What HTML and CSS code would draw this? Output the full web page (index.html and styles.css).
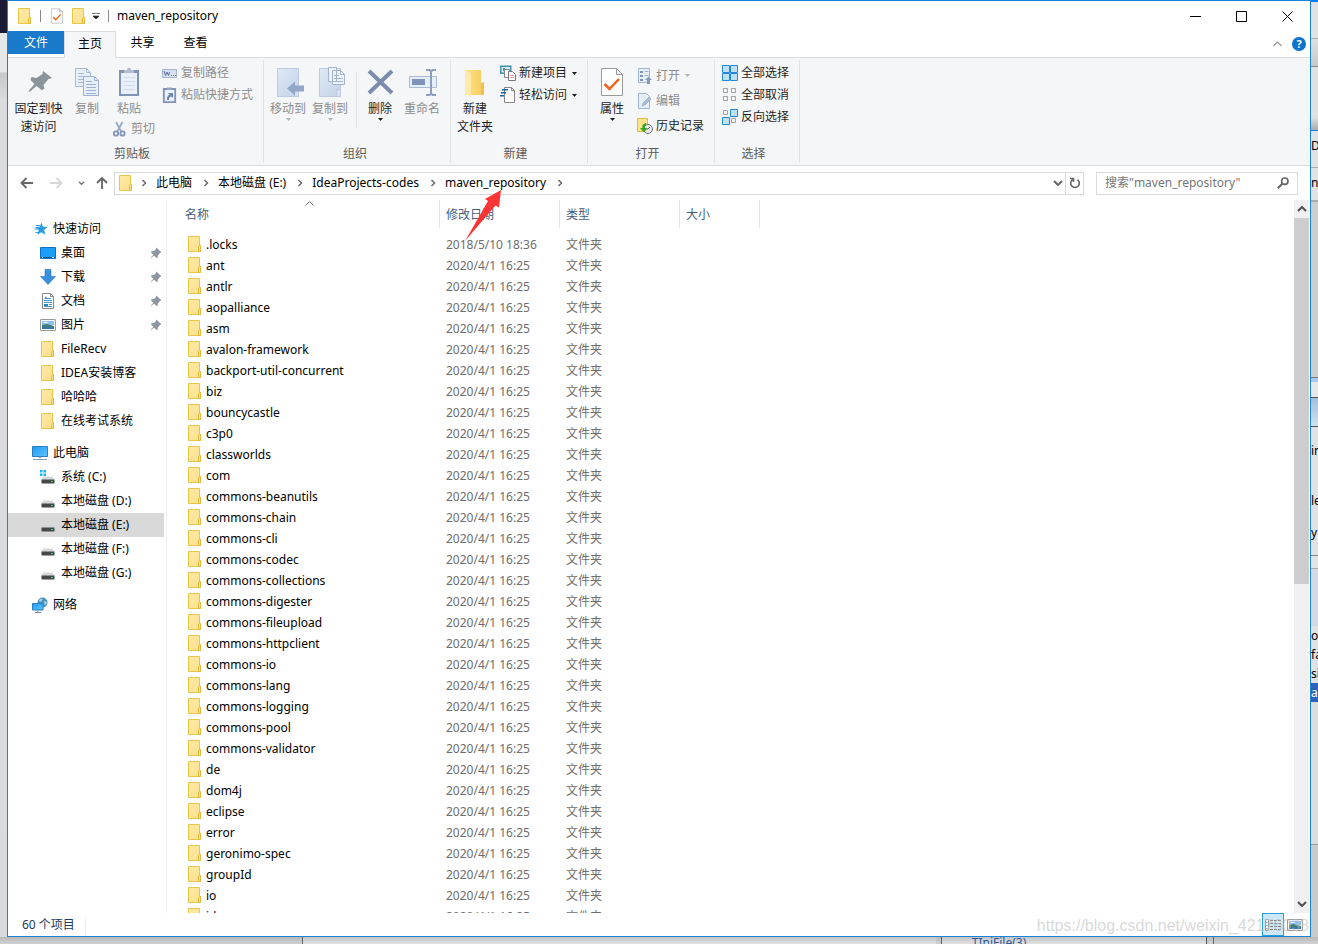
FILE: index.html
```
<!DOCTYPE html>
<html lang="zh-CN">
<head>
    <meta charset="UTF-8">
    <meta name="viewport" content="width=device-width, initial-scale=1.0">
    <title>maven_repository</title>
    <link rel="stylesheet" href="styles.css">
</head>
<body>
    <!-- Icons -->
    <svg class="sprite" aria-hidden="true">
        <defs>
            <linearGradient id="g-folder" x1="0" y1="0" x2="1" y2="1"><stop offset="0" stop-color="#ffeaa6"/><stop offset="1" stop-color="#fce08a"/></linearGradient>
            <linearGradient id="g-open" x1="0" y1="0" x2="1" y2="0"><stop offset="0" stop-color="#ffe08a"/><stop offset="1" stop-color="#f7cc5c"/></linearGradient>
            <linearGradient id="g-screen" x1="0" y1="0" x2="1" y2="1"><stop offset="0" stop-color="#1e9bf5"/><stop offset="1" stop-color="#5cc2ff"/></linearGradient>
            <linearGradient id="g-pale" x1="0" y1="0" x2="1" y2="1"><stop offset="0" stop-color="#dfe9f6"/><stop offset="1" stop-color="#c3d2e8"/></linearGradient>
        </defs>
        <symbol id="folder" viewBox="0 0 16 16">
            <path d="M1.500.5h11v9h1v6h-12z" fill="url(#g-folder)" stroke="#e9c548"/>
            <path d="M11.500 15.500v-5l1-1h1v6z" fill="#ffe38c" stroke="#e0b93c"/>
        </symbol>
        <symbol id="pin" viewBox="0 0 12 12">
            <path d="M6.500.5 11.500 5.500 10 6 8 8l-.3 2.500-1.200.5L4 8.500.8 11.300.5 11l2.800-3.200L1 5.500 1.500 4.200 4 4l2-2z" fill="#8c97a1"/>
        </symbol>
        <symbol id="chevron-right" viewBox="0 0 6 8"><path d="M1.500 1l3 3-3 3" fill="none" stroke="#6b6b6b" stroke-width="1.500"/></symbol>
        <symbol id="chevron-down" viewBox="0 0 10 6"><path d="M1 1l4 4 4-4" fill="none" stroke="currentColor" stroke-width="2"/></symbol>
        <symbol id="caret" viewBox="0 0 5 3"><path d="M0 0h5L2.500 3z" fill="currentColor"/></symbol>
        <symbol id="check-page" viewBox="0 0 24 30">
            <path d="M1.500 1.500h15l6 6v21h-21z" fill="#fff" stroke="#9a9a9a"/>
            <path d="M16.500 1.500v6h6z" fill="#eee" stroke="#9a9a9a"/>
            <path d="M4.500 17l5 5L19 12" fill="none" stroke="#f2601a" stroke-width="2.500"/>
        </symbol>
        <symbol id="drive" viewBox="0 0 16 16">
            <path d="M3 7.500h9.500l2 3.500h-13z" fill="#d5d8da"/>
            <path d="M1.500 10.500h13v4h-13z" fill="#44484b"/>
            <path d="M11 12h2v1h-2z" fill="#3ee04a"/>
        </symbol>
        <symbol id="win-drive" viewBox="0 0 16 16">
            <path d="M0 1h2.500v2.500H0zM3.500 1H6v2.500H3.500zM0 4.500h2.500V7H0zM3.500 4.500H6V7H3.500z" fill="#17b6f0"/>
            <path d="M3 7.500h9.500l2 3.500h-13z" fill="#d5d8da"/>
            <path d="M1.500 10.500h13v4h-13z" fill="#44484b"/>
            <path d="M11 12h2v1h-2z" fill="#3ee04a"/>
        </symbol>
        <symbol id="pages" viewBox="0 0 24 28">
            <path d="M.5.500h11l4 4v14h-15z" fill="#e6eef8" stroke="#a7b9d6"/>
            <path d="M11.500.5v4h4M3 5.500h6M3 8.500h6M3 11.500h6M3 14.500h6" fill="none" stroke="#a7b9d6"/>
            <path d="M8.500 8.500h11l4 4v15h-15z" fill="#e6eef8" stroke="#9db0d0"/>
            <path d="M19.500 8.500v4h4M11 13.500h6M11 16.500h10M11 19.500h10M11 22.500h10M11 25.500h10" fill="none" stroke="#9db0d0"/>
        </symbol>
        <symbol id="picture" viewBox="0 0 16 16">
            <path d="M.5 2.500h15v11H.5z" fill="#fff" stroke="#9a9a9a"/>
            <path d="M2 4h12v4H2z" fill="#8cc0f2"/>
            <path d="M2 8l5-1 7 2v3H2z" fill="#3f7d73"/>
            <path d="M2 10h12v2H2z" fill="#3574ad"/>
            <path d="M3 6c2-2 4-1 5 0z" fill="#fff"/>
        </symbol>
    </svg>

    <div class="desktop">
        <div class="behind-left"></div>

        <main class="window">
            <!-- Title bar -->
            <header class="titlebar">
                <svg class="icon"><use href="#folder"/></svg>
                <span class="divider"></span>
                <button class="quick" aria-label="属性"><svg class="icon-page"><use href="#check-page"/></svg></button>
                <button class="quick" aria-label="新建文件夹"><svg class="icon"><use href="#folder"/></svg></button>
                <button class="quick" aria-label="自定义快速访问工具栏"><svg class="customize" viewBox="0 0 8 7"><path d="M0 .5h8M1 3h6L4 6z" fill="#222" stroke="#222" stroke-width=".6"/></svg></button>
                <span class="divider"></span>
                <h1>maven_repository</h1>
                <div class="window-controls">
                    <button aria-label="最小化"><svg viewBox="0 0 11 11"><path d="M0 5.500h11" stroke="#000"/></svg></button>
                    <button aria-label="最大化"><svg viewBox="0 0 11 11"><path d="M.5.500h10v10H.5z" fill="none" stroke="#000"/></svg></button>
                    <button aria-label="关闭"><svg viewBox="0 0 11 11"><path d="M.5.500l10 10M10.500.5l-10 10" stroke="#000"/></svg></button>
                </div>
            </header>

            <!-- Tabs -->
            <nav class="tabs">
                <button class="tab tab-file">文件</button>
                <button class="tab tab-active">主页</button>
                <button class="tab">共享</button>
                <button class="tab">查看</button>
                <div class="tabs-right">
                    <button aria-label="折叠功能区"><svg class="collapse" viewBox="0 0 9 6"><path d="M.5 5l4-4 4 4" fill="none" stroke="#999" stroke-width="1.200"/></svg></button>
                    <button class="help" aria-label="帮助">?</button>
                </div>
            </nav>

            <!-- Ribbon -->
            <div class="ribbon">
                <section class="group">
                    <div class="group-body">
                        <button class="big big-wide">
                            <svg class="big-icon" viewBox="0 0 32 32"><path d="M20 4l9 7-3.500 1-5 6 1 4-3 1-5-4-7 6-1-1 6-7-4-4 1-3 5 1 6-4z" fill="#8c9499"/></svg>
                            固定到快<br>速访问
                        </button>
                        <button class="big" disabled>
                            <svg class="big-icon" viewBox="-4 -1 32 32"><use href="#pages" width="24" height="28"/></svg>
                            复制
                        </button>
                        <div class="paste">
                            <button class="big" disabled>
                                <svg class="big-icon" viewBox="0 0 32 32">
                                    <path d="M6 3h20v26H6z" fill="#7f94b8"/>
                                    <path d="M8 6h16v21H8z" fill="#e9f0f9"/>
                                    <path d="M10 10.500h12M10 14.500h12M10 18.500h12M10 22.500h12" stroke="#cfdcee"/>
                                    <path d="M11 6V3h3c0-3 4-3 4 0h3v3z" fill="#b2bdcd"/>
                                </svg>
                                粘贴
                            </button>
                            <button class="small" disabled>
                                <svg class="icon" viewBox="0 0 16 16"><path d="M4 1l5.500 10M10.500 1L5 11" stroke="#9aaac6" stroke-width="1.800"/><circle cx="4" cy="12.500" r="2.200" fill="none" stroke="#8194ba" stroke-width="1.800"/><circle cx="10.500" cy="12.500" r="2.200" fill="none" stroke="#8194ba" stroke-width="1.800"/></svg>
                                剪切
                            </button>
                        </div>
                        <div class="small-col">
                            <button class="small" disabled>
                                <svg class="icon" viewBox="0 0 16 16"><path d="M.5 4.500h14v8H.5z" fill="#d4e0f0" stroke="#a5b5d0"/><path d="M2 6l1.500 4.500L5 7l1.500 3.500L7.500 7M9 10.500h1M11 10.500h1M13 10.500h1" fill="none" stroke="#5d74a0"/></svg>
                                复制路径
                            </button>
                            <button class="small" disabled>
                                <svg class="icon" viewBox="0 0 16 16"><path d="M1.800 2h11.400v13.200H1.800z" fill="#e9f0f9" stroke="#8093b7" stroke-width="1.800"/><path d="M5 3V.5h5V3z" fill="#95a6c4"/><path d="M5 13c0-4 1-5 3-5L6 6h5v5L9.500 9.500C7 10 7 11 7 13z" fill="#6c83ae"/></svg>
                                粘贴快捷方式
                            </button>
                        </div>
                    </div>
                    <h2>剪贴板</h2>
                </section>

                <section class="group group-organize">
                    <div class="group-body">
                        <button class="big" disabled>
                            <svg class="big-icon" viewBox="0 0 32 32">
                                <path d="M5.500 1.500h21v28h-21z" fill="url(#g-pale)" stroke="#bccbe2"/>
                                <path d="M22.500 22.500h4v7h-4z" fill="#d5e1f1" stroke="#bccbe2"/>
                                <path d="M15 21.500l8-7v4h9v6h-9v4z" fill="#93a6c8"/>
                            </svg>
                            移动到
                            <svg class="caret"><use href="#caret"/></svg>
                        </button>
                        <button class="big" disabled>
                            <svg class="big-icon" viewBox="0 0 32 32">
                                <path d="M5.500 1.500h21v28h-21z" fill="url(#g-pale)" stroke="#bccbe2"/>
                                <path d="M22.500 22.500h4v7h-4z" fill="#d5e1f1" stroke="#bccbe2"/>
                                <path d="M14.500.5h8v14h-8zM18.500 3.500h8l4 4v10h-12z" fill="#eef3fa" stroke="#a3b4d0"/>
                                <path d="M26.500 3.500v4h4M20 8.500h5M20 11.500h9M20 14.500h9" fill="none" stroke="#a3b4d0"/>
                            </svg>
                            复制到
                            <svg class="caret"><use href="#caret"/></svg>
                        </button>
                        <span class="group-divider"></span>
                        <button class="big">
                            <svg class="big-icon" viewBox="0 0 32 32"><path d="M5 4l23 22M28 4L5 26" stroke="#7b8cae" stroke-width="4"/></svg>
                            删除
                            <svg class="caret"><use href="#caret"/></svg>
                        </button>
                        <button class="big" disabled>
                            <svg class="big-icon" viewBox="0 0 32 32">
                                <path d="M3.500 9.500h27v11h-27z" fill="#e6eef8" stroke="#a9bad6"/>
                                <path d="M6 12h13v6H6z" fill="#8093b8"/>
                                <path d="M20 3h3.500l1.500 1.500L26.500 3H30M25 4v23M20 28h3.500l1.500-1.500 1.500 1.500H30" fill="none" stroke="#8c9fc2" stroke-width="2"/>
                            </svg>
                            重命名
                        </button>
                    </div>
                    <h2>组织</h2>
                </section>

                <section class="group">
                    <div class="group-body">
                        <button class="big">
                            <svg class="big-icon" viewBox="0 0 32 32">
                                <path d="M6 3h16v13h3v12H6z" fill="url(#g-open)"/>
                                <path d="M6 3l6 3v24l-6-4z" fill="#ffe9ab"/>
                                <path d="M22 16l3-1v12l-3 1z" fill="#eec051"/>
                            </svg>
                            新建<br>文件夹
                        </button>
                        <div class="small-col">
                            <button class="small">
                                <svg class="icon" viewBox="0 0 16 16"><path d="M.8 1.200h10v7h-10z" fill="#d8eef8" stroke="#3d8fa8" stroke-width="1.400"/><path d="M3 3h2v3H3z" fill="#3d8fa8"/><path d="M4.500 4.500h5v8h-5z" fill="#fff" stroke="#888"/><path d="M8.500 6.500h4l3 3v6h-7z" fill="#fff" stroke="#777"/><path d="M10 10.500h4M10 12.500h4" stroke="#e99"/></svg>
                                新建项目
                                <svg class="caret"><use href="#caret"/></svg>
                            </button>
                            <button class="small">
                                <svg class="icon" viewBox="0 0 16 16"><path d="M4.500.5h7l3 3v12h-10z" fill="#fff" stroke="#888"/><path d="M11.500.5v3h3" fill="none" stroke="#888"/><path d="M2 2.700h6M1 5.700h5M0 8.700h4" stroke="#1665ad" stroke-width="1.400"/></svg>
                                轻松访问
                                <svg class="caret"><use href="#caret"/></svg>
                            </button>
                        </div>
                    </div>
                    <h2>新建</h2>
                </section>

                <section class="group">
                    <div class="group-body">
                        <button class="big">
                            <svg class="big-icon" viewBox="-4 0 32 32"><use href="#check-page" width="24" height="30"/></svg>
                            属性
                            <svg class="caret"><use href="#caret"/></svg>
                        </button>
                        <div class="small-col small-col-tall">
                            <button class="small" disabled>
                                <svg class="icon" viewBox="0 0 16 16"><path d="M1.500.500h11v14h-11z" fill="#e6eef8" stroke="#a3b4d0"/><path d="M3 3h3v2H3zM3 7h3v2H3zM3 11h3v2H3z" fill="#7f94b8"/><path d="M7.500 3.500h4M7.500 7.500h4" stroke="#a3b4d0"/><path d="M8 12l3.500-3.500L15 12h-2v4h-3v-4z" fill="#8599be"/></svg>
                                打开
                                <svg class="caret"><use href="#caret"/></svg>
                            </button>
                            <button class="small" disabled>
                                <svg class="icon" viewBox="0 0 16 16"><path d="M1.500.500h8l3 3v12h-11z" fill="#e6eef8" stroke="#a3b4d0"/><path d="M5 13l1-3 6-6 2 2-6 6z" fill="#a9bcdb" stroke="#8ea2c6" stroke-width=".6"/></svg>
                                编辑
                            </button>
                            <button class="small">
                                <svg class="icon" viewBox="0 0 16 16"><path d="M.5.500h10v13H.5z" fill="#fbe28b" stroke="#dfba45"/><circle cx="11" cy="11" r="4.500" fill="#e9e9e9" stroke="#777"/><path d="M11 11l2-2M11 11H9" stroke="#555"/><path d="M9 5c-4 1-4 4-3.500 5L3 10l4 4.500L10 10H8c-.5-1.500 0-2.500 1.500-3z" fill="#35a81f"/></svg>
                                历史记录
                            </button>
                        </div>
                    </div>
                    <h2>打开</h2>
                </section>

                <section class="group">
                    <div class="group-body">
                        <div class="small-col">
                            <button class="small">
                                <svg class="icon" viewBox="0 0 16 16"><path d="M.5.500h7v7h-7zM8.500.500h7v7h-7zM.5 8.500h7v7h-7zM8.500 8.500h7v7h-7z" fill="#bfe1f8" stroke="#2688d8"/></svg>
                                全部选择
                            </button>
                            <button class="small">
                                <svg class="icon" viewBox="0 0 16 16"><path d="M1.500 1.500h4v4h-4zM9.500 1.500h4v4h-4zM1.500 9.500h4v4h-4zM9.500 9.500h4v4h-4z" fill="#fafafa" stroke="#a0a0a0"/></svg>
                                全部取消
                            </button>
                            <button class="small">
                                <svg class="icon" viewBox="0 0 16 16"><path d="M1.500 1.500h4v4h-4zM9.500 9.500h4v4h-4z" fill="#fafafa" stroke="#a0a0a0"/><path d="M8.500.500h7v7h-7zM.5 8.500h7v7h-7z" fill="#bfe1f8" stroke="#2688d8"/></svg>
                                反向选择
                            </button>
                        </div>
                    </div>
                    <h2>选择</h2>
                </section>
            </div>

            <!-- Address bar -->
            <div class="navbar">
                <button class="nav-btn" aria-label="后退"><svg viewBox="0 0 14 12"><path d="M1.500 6H13M6.500 1l-5 5 5 5" fill="none" stroke="#666" stroke-width="1.800"/></svg></button>
                <button class="nav-btn" aria-label="前进" disabled><svg viewBox="0 0 14 12"><path d="M12.500 6H1M7.500 1l5 5-5 5" fill="none" stroke="#d6d6d6" stroke-width="1.800"/></svg></button>
                <button class="nav-btn nav-recent" aria-label="最近浏览的位置"><svg><use href="#chevron-down"/></svg></button>
                <button class="nav-btn nav-up" aria-label="上移"><svg viewBox="0 0 14 12"><path d="M7 1v11M2 6l5-5 5 5" fill="none" stroke="#666" stroke-width="1.800"/></svg></button>
                <div class="address">
                    <svg class="icon"><use href="#folder"/></svg>
                    <svg class="crumb-sep"><use href="#chevron-right"/></svg>
                    <a href="#">此电脑</a>
                    <svg class="crumb-sep"><use href="#chevron-right"/></svg>
                    <a href="#">本地磁盘 (E:)</a>
                    <svg class="crumb-sep"><use href="#chevron-right"/></svg>
                    <a href="#">IdeaProjects-codes</a>
                    <svg class="crumb-sep"><use href="#chevron-right"/></svg>
                    <a href="#">maven_repository</a>
                    <svg class="crumb-sep"><use href="#chevron-right"/></svg>
                    <button class="history" aria-label="以前的位置"><svg><use href="#chevron-down"/></svg></button>
                    <button class="refresh" aria-label="刷新"><svg viewBox="0 0 12 12"><path d="M8.500 2.700A4.300 4.300 0 1 1 3.500 2.700M1 1.500h3.500V5" fill="none" stroke="#666" stroke-width="1.600"/></svg></button>
                </div>
                <div class="search">
                    <input type="text" aria-label="搜索" placeholder='搜索"maven_repository"'>
                    <svg viewBox="0 0 12 12"><circle cx="7.800" cy="4.200" r="3.200" fill="none" stroke="#666" stroke-width="1.600"/><path d="M5.500 6.500L.8 11.200" stroke="#666" stroke-width="2"/></svg>
                </div>
            </div>

            <div class="content">
                <!-- Navigation pane -->
                <nav class="sidebar">
                    <a href="#" class="root"><svg class="icon" viewBox="0 0 16 16"><path d="M9.500 1.500l1.500 4.300 4.500.2-3.500 3 1.300 4.700-4-2.500-3.800 2.500 1.200-4.700-3.700-3 4.700-.2z" fill="#2a9be8"/><path d="M4 4.500h4M2.500 8h4M3.500 11.500h4" stroke="#2a9be8"/></svg>快速访问</a>
                    <a href="#"><svg class="icon" viewBox="0 0 16 16"><path d="M.5 2.500h15v11H.5z" fill="#1c9dfa" stroke="#0b6fc4"/><path d="M1 12.500h14" stroke="#0b5ea8"/><path d="M2 12.500h1M12 12.500h2" stroke="#fff"/></svg>桌面<svg class="pin"><use href="#pin"/></svg></a>
                    <a href="#"><svg class="icon" viewBox="0 0 16 16"><path d="M5 .5h6v7h4.500L8 15.500.5 7.500H5z" fill="#3a8fdf" stroke="#2779c6" stroke-width=".6"/></svg>下载<svg class="pin"><use href="#pin"/></svg></a>
                    <a href="#"><svg class="icon" viewBox="0 0 16 16"><path d="M2.500.500h8l3 3v12h-11z" fill="#fff" stroke="#888"/><path d="M10.500.5v3h3" fill="none" stroke="#888"/><path d="M4 7.500h8M4 9.500h8M9 11.500h3M4 13.500h8M7 5.500h4" stroke="#3e97cc"/><path d="M4.500 6L6 3l1 3M4 11h4v2H4z" fill="#2c86be"/></svg>文档<svg class="pin"><use href="#pin"/></svg></a>
                    <a href="#"><svg class="icon"><use href="#picture"/></svg>图片<svg class="pin"><use href="#pin"/></svg></a>
                    <a href="#"><svg class="icon"><use href="#folder"/></svg>FileRecv</a>
                    <a href="#"><svg class="icon"><use href="#folder"/></svg>IDEA安装博客</a>
                    <a href="#"><svg class="icon"><use href="#folder"/></svg>哈哈哈</a>
                    <a href="#"><svg class="icon"><use href="#folder"/></svg>在线考试系统</a>
                    <a href="#" class="root root-gap"><svg class="icon" viewBox="0 0 16 16"><path d="M.5 1.500h15v10H.5z" fill="url(#g-screen)" stroke="#2a7fc0"/><path d="M6.500 12h3v1.500h-3z" fill="#b9c4cc"/><path d="M1 14.500h14" stroke="#8fa0ad"/></svg>此电脑</a>
                    <a href="#"><svg class="icon"><use href="#win-drive"/></svg>系统 (C:)</a>
                    <a href="#"><svg class="icon"><use href="#drive"/></svg>本地磁盘 (D:)</a>
                    <a href="#" class="selected"><svg class="icon"><use href="#drive"/></svg>本地磁盘 (E:)</a>
                    <a href="#"><svg class="icon"><use href="#drive"/></svg>本地磁盘 (F:)</a>
                    <a href="#"><svg class="icon"><use href="#drive"/></svg>本地磁盘 (G:)</a>
                    <a href="#" class="root root-gap"><svg class="icon" viewBox="0 0 16 16"><circle cx="10.500" cy="5.500" r="5" fill="#4b93bd"/><path d="M8 2c2-1.500 3 0 2 1.500S8 5 7 4zM12 4c2 0 3 1 2.500 3l-2 1z" fill="#a9d5ea"/><path d="M.5 6.500h10.500v6.500H.5z" fill="url(#g-screen)" stroke="#2a7fc0"/><path d="M3 15.500h6M5.800 13v2" stroke="#7d909e"/></svg>网络</a>
                </nav>

                <!-- File list -->
                <div class="files">
                    <table>
                        <colgroup><col class="col-name"><col class="col-date"><col class="col-type"><col class="col-size"><col></colgroup>
                        <thead>
                            <tr>
                                <th><span>名称</span><svg class="sort" viewBox="0 0 9 5"><path d="M.5 4.500l4-4 4 4" fill="none" stroke="#777"/></svg></th>
                                <th><span>修改日期</span></th>
                                <th><span>类型</span></th>
                                <th><span>大小</span></th>
                                <th></th>
                            </tr>
                        </thead>
                        <tbody>
                            <tr><td><svg class="icon"><use href="#folder"/></svg>.locks</td><td>2018/5/10 18:36</td><td>文件夹</td><td></td><td></td></tr>
                            <tr><td><svg class="icon"><use href="#folder"/></svg>ant</td><td>2020/4/1 16:25</td><td>文件夹</td><td></td><td></td></tr>
                            <tr><td><svg class="icon"><use href="#folder"/></svg>antlr</td><td>2020/4/1 16:25</td><td>文件夹</td><td></td><td></td></tr>
                            <tr><td><svg class="icon"><use href="#folder"/></svg>aopalliance</td><td>2020/4/1 16:25</td><td>文件夹</td><td></td><td></td></tr>
                            <tr><td><svg class="icon"><use href="#folder"/></svg>asm</td><td>2020/4/1 16:25</td><td>文件夹</td><td></td><td></td></tr>
                            <tr><td><svg class="icon"><use href="#folder"/></svg>avalon-framework</td><td>2020/4/1 16:25</td><td>文件夹</td><td></td><td></td></tr>
                            <tr><td><svg class="icon"><use href="#folder"/></svg>backport-util-concurrent</td><td>2020/4/1 16:25</td><td>文件夹</td><td></td><td></td></tr>
                            <tr><td><svg class="icon"><use href="#folder"/></svg>biz</td><td>2020/4/1 16:25</td><td>文件夹</td><td></td><td></td></tr>
                            <tr><td><svg class="icon"><use href="#folder"/></svg>bouncycastle</td><td>2020/4/1 16:25</td><td>文件夹</td><td></td><td></td></tr>
                            <tr><td><svg class="icon"><use href="#folder"/></svg>c3p0</td><td>2020/4/1 16:25</td><td>文件夹</td><td></td><td></td></tr>
                            <tr><td><svg class="icon"><use href="#folder"/></svg>classworlds</td><td>2020/4/1 16:25</td><td>文件夹</td><td></td><td></td></tr>
                            <tr><td><svg class="icon"><use href="#folder"/></svg>com</td><td>2020/4/1 16:25</td><td>文件夹</td><td></td><td></td></tr>
                            <tr><td><svg class="icon"><use href="#folder"/></svg>commons-beanutils</td><td>2020/4/1 16:25</td><td>文件夹</td><td></td><td></td></tr>
                            <tr><td><svg class="icon"><use href="#folder"/></svg>commons-chain</td><td>2020/4/1 16:25</td><td>文件夹</td><td></td><td></td></tr>
                            <tr><td><svg class="icon"><use href="#folder"/></svg>commons-cli</td><td>2020/4/1 16:25</td><td>文件夹</td><td></td><td></td></tr>
                            <tr><td><svg class="icon"><use href="#folder"/></svg>commons-codec</td><td>2020/4/1 16:25</td><td>文件夹</td><td></td><td></td></tr>
                            <tr><td><svg class="icon"><use href="#folder"/></svg>commons-collections</td><td>2020/4/1 16:25</td><td>文件夹</td><td></td><td></td></tr>
                            <tr><td><svg class="icon"><use href="#folder"/></svg>commons-digester</td><td>2020/4/1 16:25</td><td>文件夹</td><td></td><td></td></tr>
                            <tr><td><svg class="icon"><use href="#folder"/></svg>commons-fileupload</td><td>2020/4/1 16:25</td><td>文件夹</td><td></td><td></td></tr>
                            <tr><td><svg class="icon"><use href="#folder"/></svg>commons-httpclient</td><td>2020/4/1 16:25</td><td>文件夹</td><td></td><td></td></tr>
                            <tr><td><svg class="icon"><use href="#folder"/></svg>commons-io</td><td>2020/4/1 16:25</td><td>文件夹</td><td></td><td></td></tr>
                            <tr><td><svg class="icon"><use href="#folder"/></svg>commons-lang</td><td>2020/4/1 16:25</td><td>文件夹</td><td></td><td></td></tr>
                            <tr><td><svg class="icon"><use href="#folder"/></svg>commons-logging</td><td>2020/4/1 16:25</td><td>文件夹</td><td></td><td></td></tr>
                            <tr><td><svg class="icon"><use href="#folder"/></svg>commons-pool</td><td>2020/4/1 16:25</td><td>文件夹</td><td></td><td></td></tr>
                            <tr><td><svg class="icon"><use href="#folder"/></svg>commons-validator</td><td>2020/4/1 16:25</td><td>文件夹</td><td></td><td></td></tr>
                            <tr><td><svg class="icon"><use href="#folder"/></svg>de</td><td>2020/4/1 16:25</td><td>文件夹</td><td></td><td></td></tr>
                            <tr><td><svg class="icon"><use href="#folder"/></svg>dom4j</td><td>2020/4/1 16:25</td><td>文件夹</td><td></td><td></td></tr>
                            <tr><td><svg class="icon"><use href="#folder"/></svg>eclipse</td><td>2020/4/1 16:25</td><td>文件夹</td><td></td><td></td></tr>
                            <tr><td><svg class="icon"><use href="#folder"/></svg>error</td><td>2020/4/1 16:25</td><td>文件夹</td><td></td><td></td></tr>
                            <tr><td><svg class="icon"><use href="#folder"/></svg>geronimo-spec</td><td>2020/4/1 16:25</td><td>文件夹</td><td></td><td></td></tr>
                            <tr><td><svg class="icon"><use href="#folder"/></svg>groupId</td><td>2020/4/1 16:25</td><td>文件夹</td><td></td><td></td></tr>
                            <tr><td><svg class="icon"><use href="#folder"/></svg>io</td><td>2020/4/1 16:25</td><td>文件夹</td><td></td><td></td></tr>
                            <tr><td><svg class="icon"><use href="#folder"/></svg>jdom</td><td>2020/4/1 16:25</td><td>文件夹</td><td></td><td></td></tr>
                        </tbody>
                    </table>
                </div>

                <div class="scrollbar">
                    <svg viewBox="0 0 10 6"><path d="M1 5l4-4 4 4" fill="none" stroke="#505050" stroke-width="2"/></svg>
                    <div class="track"><div class="thumb"></div></div>
                    <svg viewBox="0 0 10 6"><path d="M1 1l4 4 4-4" fill="none" stroke="#505050" stroke-width="2"/></svg>
                </div>
            </div>

            <!-- Status bar -->
            <footer class="statusbar">
                <span class="count">60 个项目</span>
                <div class="views">
                    <button class="view view-active" aria-label="详细信息"><svg class="icon" viewBox="0 0 16 16"><path d="M.5 2.500h3v11h-3z" fill="#fff" stroke="#999"/><path d="M1.500 5.500h1M1.500 8.500h1" stroke="#3b78b8"/><path d="M1.500 11.500h1" stroke="#d33"/><path d="M5 3.500h11M5 6.500h11M5 9.500h11M5 12.500h11" stroke="#777" stroke-dasharray="3 1"/></svg></button>
                    <button class="view" aria-label="大图标"><svg class="icon"><use href="#picture"/></svg></button>
                </div>
            </footer>

            <svg class="arrow" viewBox="0 0 36 52"><path d="M36 0L20 9l3 2L0 51l30.500-35.500 3.500 2z" fill="#fb3535"/></svg>
            <div class="watermark">https://blog.csdn.net/weixin_42176038</div>
        </main>

        <!-- Edges of the windows behind -->
        <div class="behind-right">
            <div class="slice slice-blue"></div>
            <div class="slice slice-top"></div>
            <div class="slice slice-tools"></div>
            <div class="slice slice-shade"></div>
            <div class="slice slice-d">D</div>
            <div class="slice slice-n">n,</div>
            <div class="slice slice-gray"></div>
            <div class="slice slice-aero"></div>
            <div class="slice slice-text">in</div>
            <div class="slice slice-text">le</div>
            <div class="slice slice-y">y</div>
            <div class="slice slice-head"></div>
            <div class="slice slice-row">ou</div>
            <div class="slice slice-row">fa</div>
            <div class="slice slice-row">si</div>
            <div class="slice slice-row slice-on">a</div>
            <div class="slice slice-low"></div>
            <div class="slice slice-end"></div>
        </div>

        <div class="behind-bottom">
            <div class="bottom-a"></div>
            <div class="bottom-b"></div>
            <div class="bottom-c">TIniFile(3)</div>
            <div class="bottom-d"></div>
        </div>
    </div>
</body>
</html>
```
FILE: styles.css
```
* {
    box-sizing: border-box;
}
body {
    margin: 0;
    font-family: "Noto Sans", "Noto Sans CJK SC", sans-serif;
    font-size: 12px;
    line-height: 18px;
    color: #000;
    background-color: #d6d6d6;
}
button {
    margin: 0;
    padding: 0;
    border: none;
    background: none;
    font: inherit;
    color: inherit;
    cursor: default;
}
a {
    color: inherit;
    text-decoration: none;
}
svg {
    display: block;
    flex: none;
}
.sprite {
    position: absolute;
    width: 0;
    height: 0;
}
.icon {
    width: 16px;
    height: 16px;
}
.caret {
    width: 5px;
    height: 3px;
}

/* Desktop */
.desktop {
    display: grid;
    grid-template-columns: 7px minmax(0, 1fr) 7px;
    grid-template-rows: minmax(0, 1fr) 7px;
    height: 100vh;
    overflow: hidden;
}
.behind-left {
    background: linear-gradient(#1b1b38 33px, #e6e7e9 33px, #e6e7e9 72px, #c8c8c8 73px, #dcdcde 100px, #d8dadd);
}
.behind-right {
    display: flex;
    flex-direction: column;
    overflow: hidden;
    background: #e2e2e2;
}
.behind-bottom {
    grid-column: 1 / -1;
    display: flex;
    overflow: hidden;
    background: linear-gradient(#b8b8b8, #d2d2d2);
}
.bottom-a {
    width: 23%;
    border-right: 1px solid #666;
}
.bottom-b {
    width: 48%;
    background: linear-gradient(#c4c4c4, #e2e2e2);
}
.bottom-c {
    flex: 1;
    margin-left: 5px;
    padding-left: 30px;
    border-left: 1px solid #1e6fb8;
    border-right: 1px solid #555;
    line-height: 12px;
    color: #2a5a9a;
    background: linear-gradient(#c4c4c4, #e2e2e2);
}
.bottom-d {
    width: 8%;
    margin-left: 6px;
    border-left: 1px solid #666;
}
.slice {
    flex: none;
    overflow: hidden;
    white-space: nowrap;
}
.slice-blue {
    height: 2px;
    background: #0a7bf0;
}
.slice-top {
    height: 37px;
    border-bottom: 1px solid #aaa;
}
.slice-tools {
    height: 28px;
    background: linear-gradient(#e0e0e0, #c8c8c8);
    border-bottom: 1px solid #888;
}
.slice-shade {
    height: 64px;
    background: linear-gradient(#e0e0e0 80%, #aaa);
    border-bottom: 1px solid #1883d7;
}
.slice-d {
    height: 37px;
    line-height: 30px;
    border-bottom: 1px solid #aaa;
}
.slice-n {
    height: 33px;
    line-height: 30px;
    border-bottom: 1px solid #aaa;
}
.slice-gray {
    height: 177px;
    background: #cdcdcd;
    border-top: 1px solid #aaa;
    border-bottom: 1px solid #777;
}
.slice-aero {
    height: 49px;
    background: linear-gradient(#a9c8ec 4px, #e8e8e8 4px, #e8e8e8 19px, #555 19px, #555 20px, #a5bedb 20px, #cfe3ea);
    border-bottom: 1px solid #555;
}
.slice-text {
    height: 50px;
    line-height: 48px;
}
.slice-y {
    height: 29px;
    line-height: 12px;
    border-bottom: 1px solid #888;
}
.slice-head {
    height: 70px;
    background: linear-gradient(#e4e4e4 12px, #aaa 12px, #aaa 13px, #d5d9e2 13px);
}
.slice-row {
    height: 19px;
    line-height: 19px;
}
.slice-on {
    color: #fff;
    background: #2f62b8;
}
.slice-low {
    height: 143px;
    background: #dcdcdc;
    border-bottom: 1px solid #999;
}
.slice-end {
    flex: 1;
    background: #cacaca;
}

/* Window */
.window {
    position: relative;
    display: flex;
    flex-direction: column;
    min-width: 0;
    background: #fff;
    border: 1px solid #1883d7;
}
.titlebar {
    display: flex;
    align-items: center;
    height: 30px;
    padding-left: 9px;
}
.titlebar h1 {
    flex: none;
    margin: 0 0 0 8px;
    font-size: 12px;
    font-weight: normal;
}
.divider {
    width: 1px;
    height: 12px;
    margin: 0 7px;
    background: #888;
}
.quick {
    flex: none;
    margin-right: 5px;
}
.quick + .divider {
    margin: 0 0 0 3px;
}
.icon-page {
    width: 18px;
    height: 16px;
}
.customize {
    width: 8px;
    height: 7px;
}
.window-controls {
    display: flex;
    margin-left: auto;
}
.window-controls button {
    display: flex;
    align-items: center;
    justify-content: center;
    width: 46px;
    height: 29px;
}
.window-controls svg {
    width: 11px;
    height: 11px;
}

/* Tabs */
.tabs {
    display: flex;
    height: 27px;
    border-bottom: 1px solid #dadbdc;
}
.tab {
    width: 53px;
    height: 24px;
}
.tab-file {
    width: 56px;
    height: 23px;
    color: #fff;
    background: #1979ca;
}
.tab-active {
    width: 52px;
    height: 27px;
    padding-bottom: 2px;
    background: #f5f6f7;
    border: 1px solid #dadbdc;
    border-bottom: none;
}
.tabs-right {
    display: flex;
    align-items: center;
    gap: 10px;
    margin-left: auto;
    padding-right: 4px;
}
.collapse {
    width: 9px;
    height: 6px;
}
.help {
    width: 14px;
    height: 14px;
    border-radius: 50%;
    line-height: 14px;
    font-size: 11px;
    font-weight: bold;
    color: #fff;
    background: #0b72cf;
}

/* Ribbon */
.ribbon {
    display: flex;
    height: 108px;
    padding: 2px 0;
    background: #f5f6f7;
    border-bottom: 1px solid #dadbdc;
}
.group {
    display: flex;
    flex-direction: column;
    justify-content: space-between;
    padding: 0 10px 0 3px;
    border-right: 1px solid #e1e2e4;
}
.group-organize {
    padding-right: 7px;
}
.group h2 {
    margin: 0;
    font-size: 12px;
    font-weight: normal;
    text-align: center;
    color: #5a5a5a;
}
.group-body {
    display: flex;
    align-items: flex-start;
}
.big {
    display: flex;
    flex-direction: column;
    align-items: center;
    width: 42px;
    padding-top: 7px;
    white-space: nowrap;
    color: #1e1e1e;
}
.big-wide {
    width: 55px;
}
.big-icon {
    width: 32px;
    height: 32px;
    margin-bottom: 1px;
}
.small {
    display: flex;
    align-items: center;
    gap: 3px;
    height: 22px;
    white-space: nowrap;
    color: #1e1e1e;
}
.small .caret {
    margin-left: 2px;
}
.big:disabled,
.small:disabled {
    color: #8d8d8d;
}
.small:disabled .caret,
.big:disabled .caret {
    color: #b0b0b0;
}
.small-col {
    padding-top: 2px;
    margin-left: 4px;
}
.small-col-tall {
    padding-top: 3px;
}
.small-col-tall .small {
    height: 25px;
}
.paste .small {
    margin: 0 3px 0 4px;
}
.group-divider {
    width: 1px;
    height: 56px;
    margin: 12px 2px 0 5px;
    background: #e1e2e4;
}

/* Address bar */
.navbar {
    display: flex;
    align-items: center;
    height: 34px;
    padding: 0 12px;
}
.nav-btn svg {
    width: 14px;
    height: 12px;
}
.nav-btn {
    margin-right: 15px;
}
.nav-recent {
    margin-right: 10px;
    color: #777;
}
.nav-recent svg {
    width: 7px;
    height: 4px;
}
.nav-up {
    margin-right: 5px;
}
.address {
    display: flex;
    flex: 1;
    align-items: center;
    height: 23px;
    padding-left: 3px;
    border: 1px solid #d9d9d9;
    white-space: nowrap;
}
.crumb-sep {
    width: 6px;
    height: 8px;
    margin: 0 9px 0 11px;
}
.address .icon + .crumb-sep {
    margin-left: 7px;
}
.history {
    margin-left: auto;
    padding: 0 2px;
    color: #666;
}
.history svg {
    width: 10px;
    height: 6px;
}
.refresh {
    display: flex;
    align-items: center;
    height: 21px;
    padding: 0 2px 0 3px;
    border-left: 1px solid #d9d9d9;
}
.refresh svg {
    width: 12px;
    height: 12px;
}
.search {
    display: flex;
    align-items: center;
    width: 202px;
    height: 23px;
    margin-left: 12px;
    padding: 0 8px;
    border: 1px solid #d9d9d9;
}
.search input {
    flex: 1;
    min-width: 0;
    padding: 0;
    border: none;
    outline: none;
    font: inherit;
}
.search input::placeholder {
    color: #767676;
}
.search svg {
    width: 12px;
    height: 12px;
}

/* Content */
.content {
    display: flex;
    flex: 1;
    min-height: 0;
}
.sidebar {
    width: 159px;
    padding: 17px 2px 0 0;
    border-right: 1px solid #f0f0f0;
}
.sidebar a {
    display: flex;
    align-items: center;
    gap: 5px;
    height: 24px;
    padding: 0 2px 0 32px;
}
.sidebar .root {
    padding-left: 24px;
}
.sidebar .root-gap {
    margin-top: 8px;
}
.sidebar .selected {
    background: #d9d9d9;
}
.pin {
    width: 12px;
    height: 12px;
    margin-left: auto;
}
.files {
    flex: 1;
    min-width: 0;
    overflow: hidden;
}
.files table {
    width: 100%;
    table-layout: fixed;
    border-collapse: collapse;
}
.col-name {
    width: 273px;
}
.col-date,
.col-type {
    width: 120px;
}
.col-size {
    width: 80px;
}
.files th {
    position: relative;
    height: 34px;
    padding: 0 0 6px;
    font-weight: normal;
    text-align: left;
    color: #44607f;
}
.files th span {
    display: block;
    height: 28px;
    padding-left: 6px;
    line-height: 30px;
    border-right: 1px solid #e5e5e5;
}
.files th:first-child span {
    padding-left: 18px;
}
.sort {
    position: absolute;
    top: 1px;
    left: 138px;
    width: 9px;
    height: 5px;
}
.files td {
    height: 21px;
    padding: 0 0 0 6px;
    white-space: nowrap;
    color: #6d6d6d;
}
.files td:first-child {
    padding-left: 20px;
    color: #000;
}
.files td .icon {
    float: left;
    margin-right: 3px;
}
.scrollbar {
    display: flex;
    flex-direction: column;
    align-items: center;
    width: 15px;
    margin-right: 1px;
    padding: 6px 0;
    background: #f0f0f0;
}
.scrollbar svg {
    width: 10px;
    height: 6px;
}
.track {
    flex: 1;
    width: 100%;
    margin: 6px 0;
}
.thumb {
    height: 54%;
    background: #cdcdcd;
}

/* Status bar */
.statusbar {
    display: flex;
    align-items: center;
    justify-content: space-between;
    height: 23px;
    padding-left: 14px;
}
.count {
    padding-right: 10px;
    border-right: 1px solid #f0f0f0;
    color: #1e395b;
}
.views {
    display: flex;
    padding-right: 4px;
}
.view {
    display: flex;
    align-items: center;
    justify-content: center;
    width: 22px;
    height: 23px;
}
.view-active {
    background: #cce8f6;
    border: 1px solid #26a0da;
}

/* Drawn over the window */
.arrow {
    position: absolute;
    top: 189px;
    left: 457px;
    width: 36px;
    height: 52px;
}
.watermark {
    position: absolute;
    right: 1px;
    bottom: 1px;
    font-family: "Liberation Sans", Arial, sans-serif;
    font-size: 16px;
    color: rgba(190, 190, 190, 0.6);
    pointer-events: none;
}
```
